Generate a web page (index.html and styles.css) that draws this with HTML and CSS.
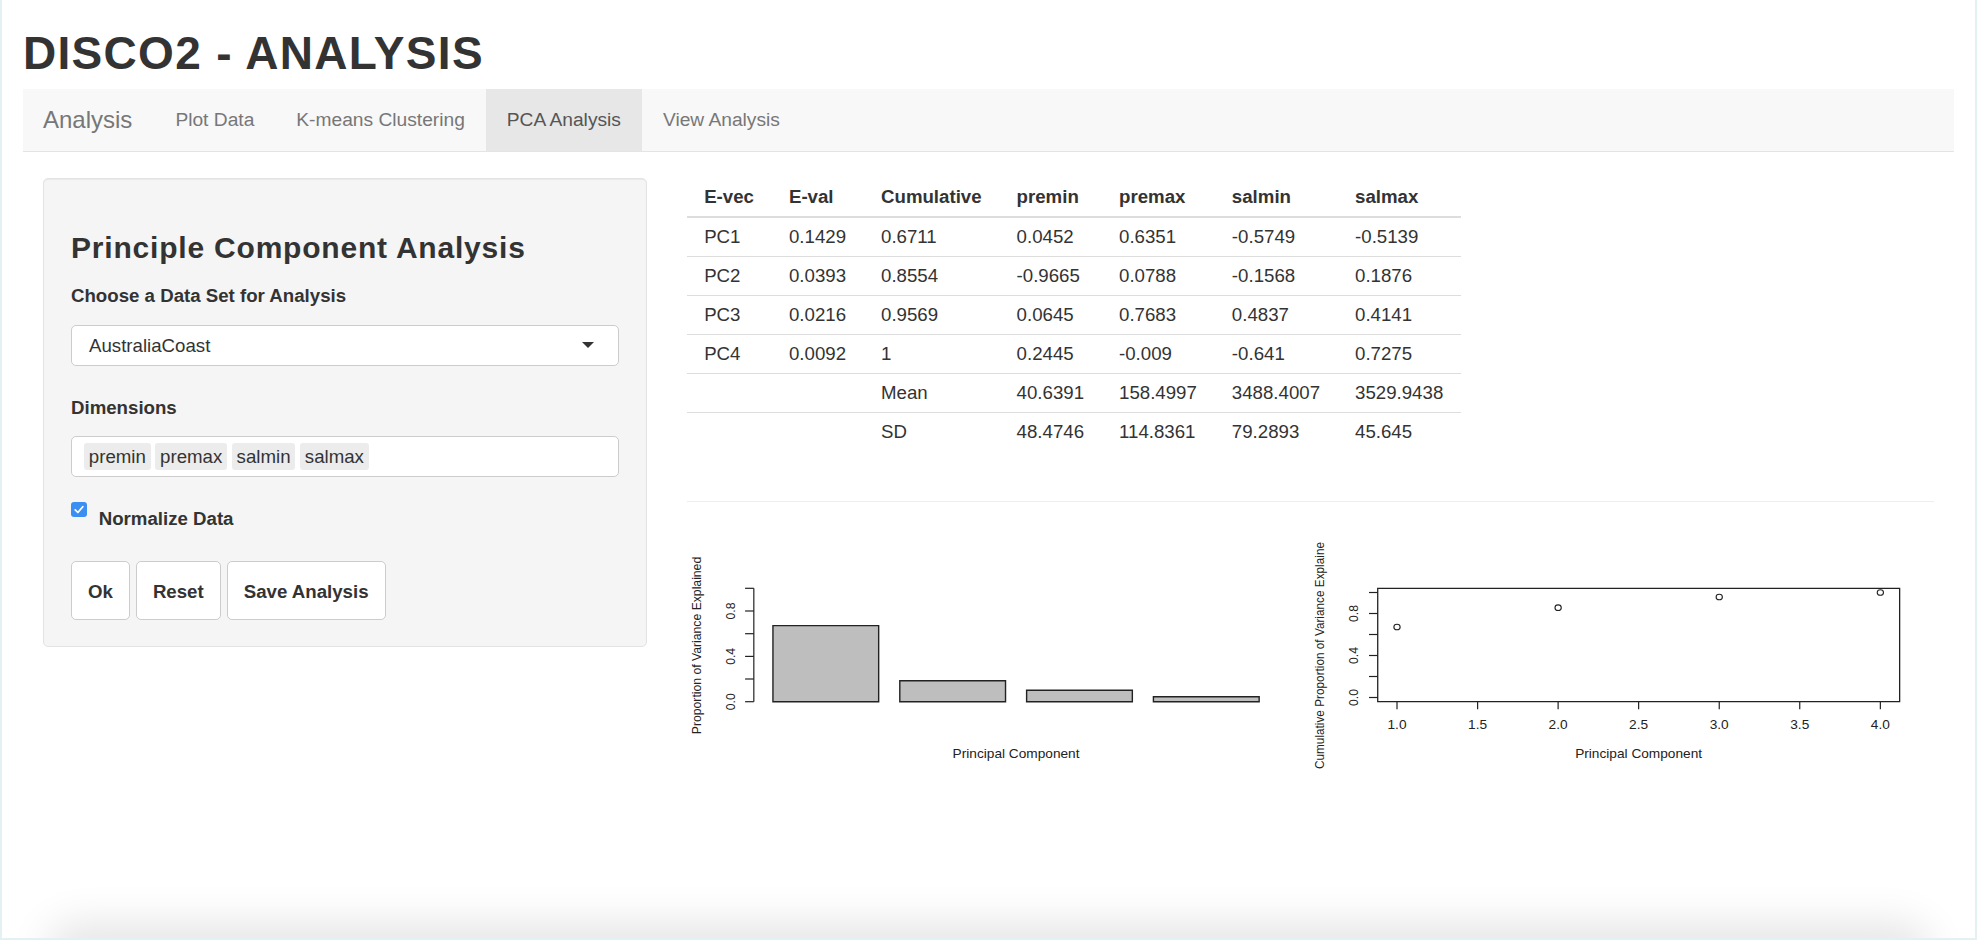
FILE: index.html
```html
<!DOCTYPE html>
<html lang="en">
<head>
<meta charset="utf-8">
<title>DISCO2 - ANALYSIS</title>
<link rel="stylesheet" href="styles.css">
</head>
<body>
<div class="page">
  <h1 class="title">DISCO2 - ANALYSIS</h1>
  <nav class="navbar">
    <span class="brand">Analysis</span>
    <ul class="nav">
      <li class="nav-item">Plot Data</li>
      <li class="nav-item">K-means Clustering</li>
      <li class="nav-item active">PCA Analysis</li>
      <li class="nav-item">View Analysis</li>
    </ul>
  </nav>
  <div class="layout">
    <aside class="side">
      <div class="well">
        <h3 class="panel-title">Principle Component Analysis</h3>
        <label class="lbl">Choose a Data Set for Analysis</label>
        <div class="select"><span>AustraliaCoast</span><span class="caret"></span></div>
        <label class="lbl lbl-dims">Dimensions</label>
        <div class="tags">
          <span class="tag">premin</span><span class="tag">premax</span><span class="tag">salmin</span><span class="tag">salmax</span>
        </div>
        <div class="check">
          <svg class="cb" width="16" height="15" viewBox="0 0 16 15"><rect x="0" y="0" width="16" height="15" rx="3" fill="#3c8ff2"/><path d="M4.2 7.9 L6.9 10.5 L11.8 4.7" stroke="#fff" stroke-width="1.7" fill="none" stroke-linecap="round" stroke-linejoin="round"/></svg>
          <span class="check-text">Normalize Data</span>
        </div>
        <div class="buttons">
          <button class="btn">Ok</button>
          <button class="btn">Reset</button>
          <button class="btn">Save Analysis</button>
        </div>
      </div>
    </aside>
    <main class="main">
      <table class="pca">
        <thead>
          <tr><th>E-vec</th><th>E-val</th><th>Cumulative</th><th>premin</th><th>premax</th><th>salmin</th><th>salmax</th></tr>
        </thead>
        <tbody>
          <tr><td>PC1</td><td>0.1429</td><td>0.6711</td><td>0.0452</td><td>0.6351</td><td>-0.5749</td><td>-0.5139</td></tr>
          <tr><td>PC2</td><td>0.0393</td><td>0.8554</td><td>-0.9665</td><td>0.0788</td><td>-0.1568</td><td>0.1876</td></tr>
          <tr><td>PC3</td><td>0.0216</td><td>0.9569</td><td>0.0645</td><td>0.7683</td><td>0.4837</td><td>0.4141</td></tr>
          <tr><td>PC4</td><td>0.0092</td><td>1</td><td>0.2445</td><td>-0.009</td><td>-0.641</td><td>0.7275</td></tr>
          <tr><td></td><td></td><td>Mean</td><td>40.6391</td><td>158.4997</td><td>3488.4007</td><td>3529.9438</td></tr>
          <tr><td></td><td></td><td>SD</td><td>48.4746</td><td>114.8361</td><td>79.2893</td><td>45.645</td></tr>
        </tbody>
      </table>
      <hr class="sep">
      <div class="plots">
        <svg class="plot" viewBox="0 0 556.25 250" preserveAspectRatio="none">
          <g stroke="#222" stroke-width="1.2" fill="none">
            <line x1="59.6" y1="60.3" x2="59.6" y2="173.7" vector-effect="non-scaling-stroke"/>
            <line x1="51.8" y1="173.7" x2="59.6" y2="173.7" vector-effect="non-scaling-stroke"/>
            <line x1="51.8" y1="151" x2="59.6" y2="151" vector-effect="non-scaling-stroke"/>
            <line x1="51.8" y1="128.4" x2="59.6" y2="128.4" vector-effect="non-scaling-stroke"/>
            <line x1="51.8" y1="105.7" x2="59.6" y2="105.7" vector-effect="non-scaling-stroke"/>
            <line x1="51.8" y1="83" x2="59.6" y2="83" vector-effect="non-scaling-stroke"/>
            <line x1="51.8" y1="60.3" x2="59.6" y2="60.3" vector-effect="non-scaling-stroke"/>
          </g>
          <g fill="#bebebe" stroke="#222" stroke-width="1.4">
            <rect x="76.65" y="97.6" width="94.3" height="76.1" vector-effect="non-scaling-stroke"/>
            <rect x="189.8" y="152.8" width="94.3" height="20.9" vector-effect="non-scaling-stroke"/>
            <rect x="302.9" y="162.2" width="94.3" height="11.5" vector-effect="non-scaling-stroke"/>
            <rect x="416.0" y="168.8" width="94.3" height="4.9" vector-effect="non-scaling-stroke"/>
          </g>
          <g class="plot-text">
            <text transform="translate(42.9,173.7) rotate(-90)" text-anchor="middle">0.0</text>
            <text transform="translate(42.9,128.4) rotate(-90)" text-anchor="middle">0.4</text>
            <text transform="translate(42.9,83) rotate(-90)" text-anchor="middle">0.8</text>
            <text transform="translate(12.5,117.5) rotate(-90)" text-anchor="middle">Proportion of Variance Explained</text>
            <text x="293.5" y="230" text-anchor="middle">Principal Component</text>
          </g>
        </svg>
        <svg class="plot" viewBox="0 0 556.25 250" preserveAspectRatio="none">
          <rect x="60.4" y="60.3" width="465.5" height="113.4" fill="none" stroke="#222" stroke-width="1.3" vector-effect="non-scaling-stroke"/>
          <g stroke="#222" stroke-width="1.2">
            <line x1="52.6" y1="169.5" x2="60.4" y2="169.5" vector-effect="non-scaling-stroke"/>
            <line x1="52.6" y1="148.5" x2="60.4" y2="148.5" vector-effect="non-scaling-stroke"/>
            <line x1="52.6" y1="127.5" x2="60.4" y2="127.5" vector-effect="non-scaling-stroke"/>
            <line x1="52.6" y1="106.5" x2="60.4" y2="106.5" vector-effect="non-scaling-stroke"/>
            <line x1="52.6" y1="85.5" x2="60.4" y2="85.5" vector-effect="non-scaling-stroke"/>
            <line x1="52.6" y1="64.5" x2="60.4" y2="64.5" vector-effect="non-scaling-stroke"/>
            <line x1="77.6" y1="173.7" x2="77.6" y2="181.3" vector-effect="non-scaling-stroke"/>
            <line x1="149.5" y1="173.7" x2="149.5" y2="181.3" vector-effect="non-scaling-stroke"/>
            <line x1="221.3" y1="173.7" x2="221.3" y2="181.3" vector-effect="non-scaling-stroke"/>
            <line x1="293.1" y1="173.7" x2="293.1" y2="181.3" vector-effect="non-scaling-stroke"/>
            <line x1="365" y1="173.7" x2="365" y2="181.3" vector-effect="non-scaling-stroke"/>
            <line x1="436.8" y1="173.7" x2="436.8" y2="181.3" vector-effect="non-scaling-stroke"/>
            <line x1="508.7" y1="173.7" x2="508.7" y2="181.3" vector-effect="non-scaling-stroke"/>
          </g>
          <g fill="none" stroke="#222" stroke-width="1.1">
            <circle cx="77.6" cy="99" r="2.8" vector-effect="non-scaling-stroke"/>
            <circle cx="221.3" cy="79.7" r="2.8" vector-effect="non-scaling-stroke"/>
            <circle cx="365" cy="69" r="2.8" vector-effect="non-scaling-stroke"/>
            <circle cx="508.7" cy="64.5" r="2.8" vector-effect="non-scaling-stroke"/>
          </g>
          <g class="plot-text">
            <text transform="translate(42.9,169.5) rotate(-90)" text-anchor="middle">0.0</text>
            <text transform="translate(42.9,127.5) rotate(-90)" text-anchor="middle">0.4</text>
            <text transform="translate(42.9,85.5) rotate(-90)" text-anchor="middle">0.8</text>
            <text x="77.6" y="201.3" text-anchor="middle">1.0</text>
            <text x="149.5" y="201.3" text-anchor="middle">1.5</text>
            <text x="221.3" y="201.3" text-anchor="middle">2.0</text>
            <text x="293.1" y="201.3" text-anchor="middle">2.5</text>
            <text x="365" y="201.3" text-anchor="middle">3.0</text>
            <text x="436.8" y="201.3" text-anchor="middle">3.5</text>
            <text x="508.7" y="201.3" text-anchor="middle">4.0</text>
            <text transform="translate(12.5,241) rotate(-90)" text-anchor="start" textLength="227" lengthAdjust="spacingAndGlyphs">Cumulative Proportion of Variance Explaine</text>
            <text x="293.1" y="230" text-anchor="middle">Principal Component</text>
          </g>
        </svg>
      </div>
    </main>
  </div>
</div>
<div class="shade"></div>
</body>
</html>
```

FILE: styles.css
```css
html {
  background: #e4f1f3;
  height: 940px;
}

body {
  margin: 0 2px;
  height: 938px;
  background: #fff;
  position: relative;
  overflow: hidden;
  font-family: "Liberation Sans", Arial, Helvetica, sans-serif;
  font-size: 18.67px;
  line-height: 26.67px;
  color: #333;
}

.page {
  padding: 0 21px;
}

.title {
  margin: 28px 0 10.6px;
  font-size: 46px;
  line-height: 50.6px;
  font-weight: 700;
  letter-spacing: 1.3px;
  color: #333;
}

.navbar {
  display: flex;
  align-items: stretch;
  height: 62px;
  border-bottom: 1px solid #e4e4e4;
  background: #f8f8f8;
  margin-bottom: 26px;
}

.brand {
  font-size: 24px;
  line-height: 62px;
  padding: 0 22px 0 20px;
  color: #777;
}

.nav {
  display: flex;
  margin: 0;
  padding: 0;
  list-style: none;
}

.nav-item {
  padding: 0 21px;
  font-size: 19.2px;
  line-height: 62px;
  color: #777;
}

.nav-item.active {
  background: #e7e7e7;
  color: #555;
}

.layout {
  display: flex;
}

.side {
  width: 643.67px;
  flex: none;
  padding: 0 20px;
  box-sizing: border-box;
}

.main {
  flex: 1;
  min-width: 0;
  padding: 0 20px;
}

.well {
  background: #f5f5f5;
  border: 1px solid #e3e3e3;
  border-radius: 5px;
  box-shadow: inset 0 1px 1px rgba(0, 0, 0, 0.05);
  padding: 25px 27px 26px;
}

.panel-title {
  margin: 26.7px 0 19px;
  font-size: 30px;
  line-height: 33px;
  font-weight: 700;
  letter-spacing: 0.8px;
  color: #333;
}

.lbl {
  display: block;
  font-weight: 700;
  margin-bottom: 15px;
}

.lbl-dims {
  margin-top: 28.5px;
}

.select {
  display: flex;
  justify-content: space-between;
  align-items: center;
  background: #fff;
  border: 1px solid #ccc;
  border-radius: 5px;
  padding: 7px 24px 6px 17px;
}

.caret {
  width: 0;
  height: 0;
  border-left: 6.5px solid transparent;
  border-right: 6.5px solid transparent;
  border-top: 6px solid #333;
  margin-top: -1px;
}

.tags {
  display: flex;
  gap: 4.7px;
  background: #fff;
  border: 1px solid #ccc;
  border-radius: 5px;
  padding: 6px 12px;
}

.tag {
  display: block;
  height: 27px;
  line-height: 27px;
  padding: 0 4.8px;
  background: #ececec;
  border-radius: 3px;
}

.check {
  display: flex;
  align-items: flex-start;
  margin-top: 25px;
}

.cb {
  display: block;
  flex: none;
}

.check-text {
  font-weight: 700;
  margin: 4px 0 0 11.7px;
}

.buttons {
  display: flex;
  gap: 6px;
  margin-top: 27.8px;
}

.btn {
  font-family: inherit;
  font-size: 18.67px;
  font-weight: 700;
  line-height: 24px;
  color: #333;
  background: #fff;
  border: 1px solid #ccc;
  border-radius: 5px;
  padding: 18px 16px 15px;
  margin: 0;
}

.pca {
  border-collapse: collapse;
  font-size: 18.67px;
}

.pca th,
.pca td {
  padding: 6px 17.5px;
  line-height: 26px;
  text-align: left;
  white-space: nowrap;
}

.pca th {
  font-weight: 700;
  border-bottom: 2px solid #ddd;
}

.pca tbody tr + tr td {
  border-top: 1px solid #ddd;
}

.sep {
  border: 0;
  border-top: 1px solid #eee;
  margin: 50px 0 26px;
  height: 0;
}

.plots {
  display: flex;
}

.plot {
  display: block;
  flex: 1;
  width: 50%;
  height: 250px;
}

.plot-text {
  font-family: "Liberation Sans", Arial, sans-serif;
  font-size: 12.2px;
  fill: #222;
}

.shade {
  position: absolute;
  left: 60px;
  right: 60px;
  bottom: -30px;
  height: 30px;
  border-radius: 40px;
  box-shadow: 0 0 40px 16px rgba(0, 0, 0, 0.1);
}
```
